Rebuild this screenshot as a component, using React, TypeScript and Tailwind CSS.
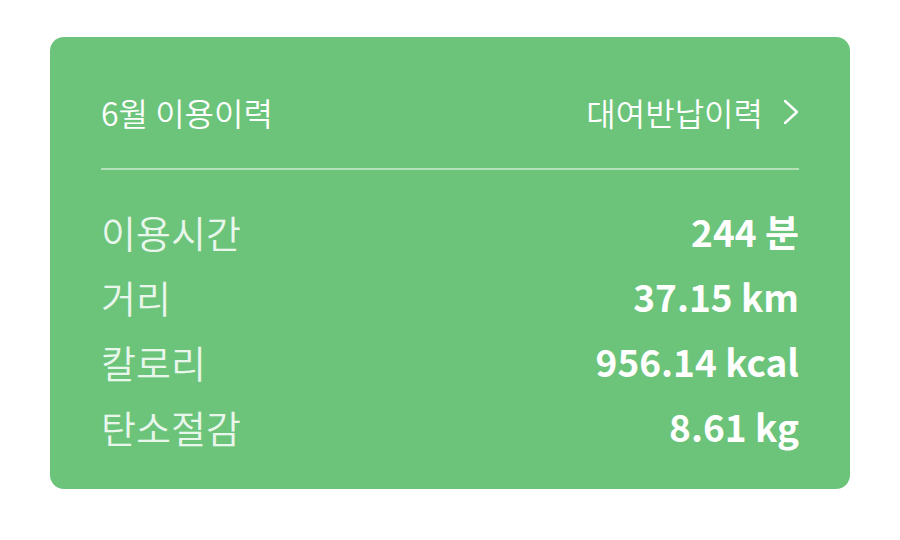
import React from "react";

const rows = [
  { label: "이용시간", value: "244 분" },
  { label: "거리", value: "37.15 km" },
  { label: "칼로리", value: "956.14 kcal" },
  { label: "탄소절감", value: "8.61 kg" },
];

export default function App() {
  return (
    <div
      className="w-[900px] h-[540px] bg-white pt-[37px] pl-[50px]"
      style={{ fontFamily: '"Noto Sans CJK KR", "Noto Sans", sans-serif' }}
    >
      <div className="w-[800px] h-[452px] rounded-[14px] bg-[#6cc47b] px-[51px]">
        <div className="flex items-center justify-between h-[131px] pt-[18px]">
          <span className="text-[32px] leading-none font-[350] text-white">6월 이용이력</span>
          <div className="flex items-center gap-[20px]">
            <span className="text-[32px] leading-none font-[350] text-white">대여반납이력</span>
            <svg width="16" height="26" viewBox="0 0 16 26" fill="none">
              <path d="M2 2 L14 13 L2 24" stroke="white" strokeWidth="2.4" strokeLinecap="round" strokeLinejoin="round" />
            </svg>
          </div>
        </div>
        <div className="h-[2px] bg-[#b4e0ba]" />
        <div className="pt-[29px] flex flex-col">
          {rows.map((r) => (
            <div key={r.label} className="flex items-center justify-between h-[65px]">
              <span className="text-[38px] leading-none font-[350] text-[#e9f6eb]">{r.label}</span>
              <span className="text-[37px] leading-none font-bold text-white">{r.value}</span>
            </div>
          ))}
        </div>
      </div>
    </div>
  );
}
